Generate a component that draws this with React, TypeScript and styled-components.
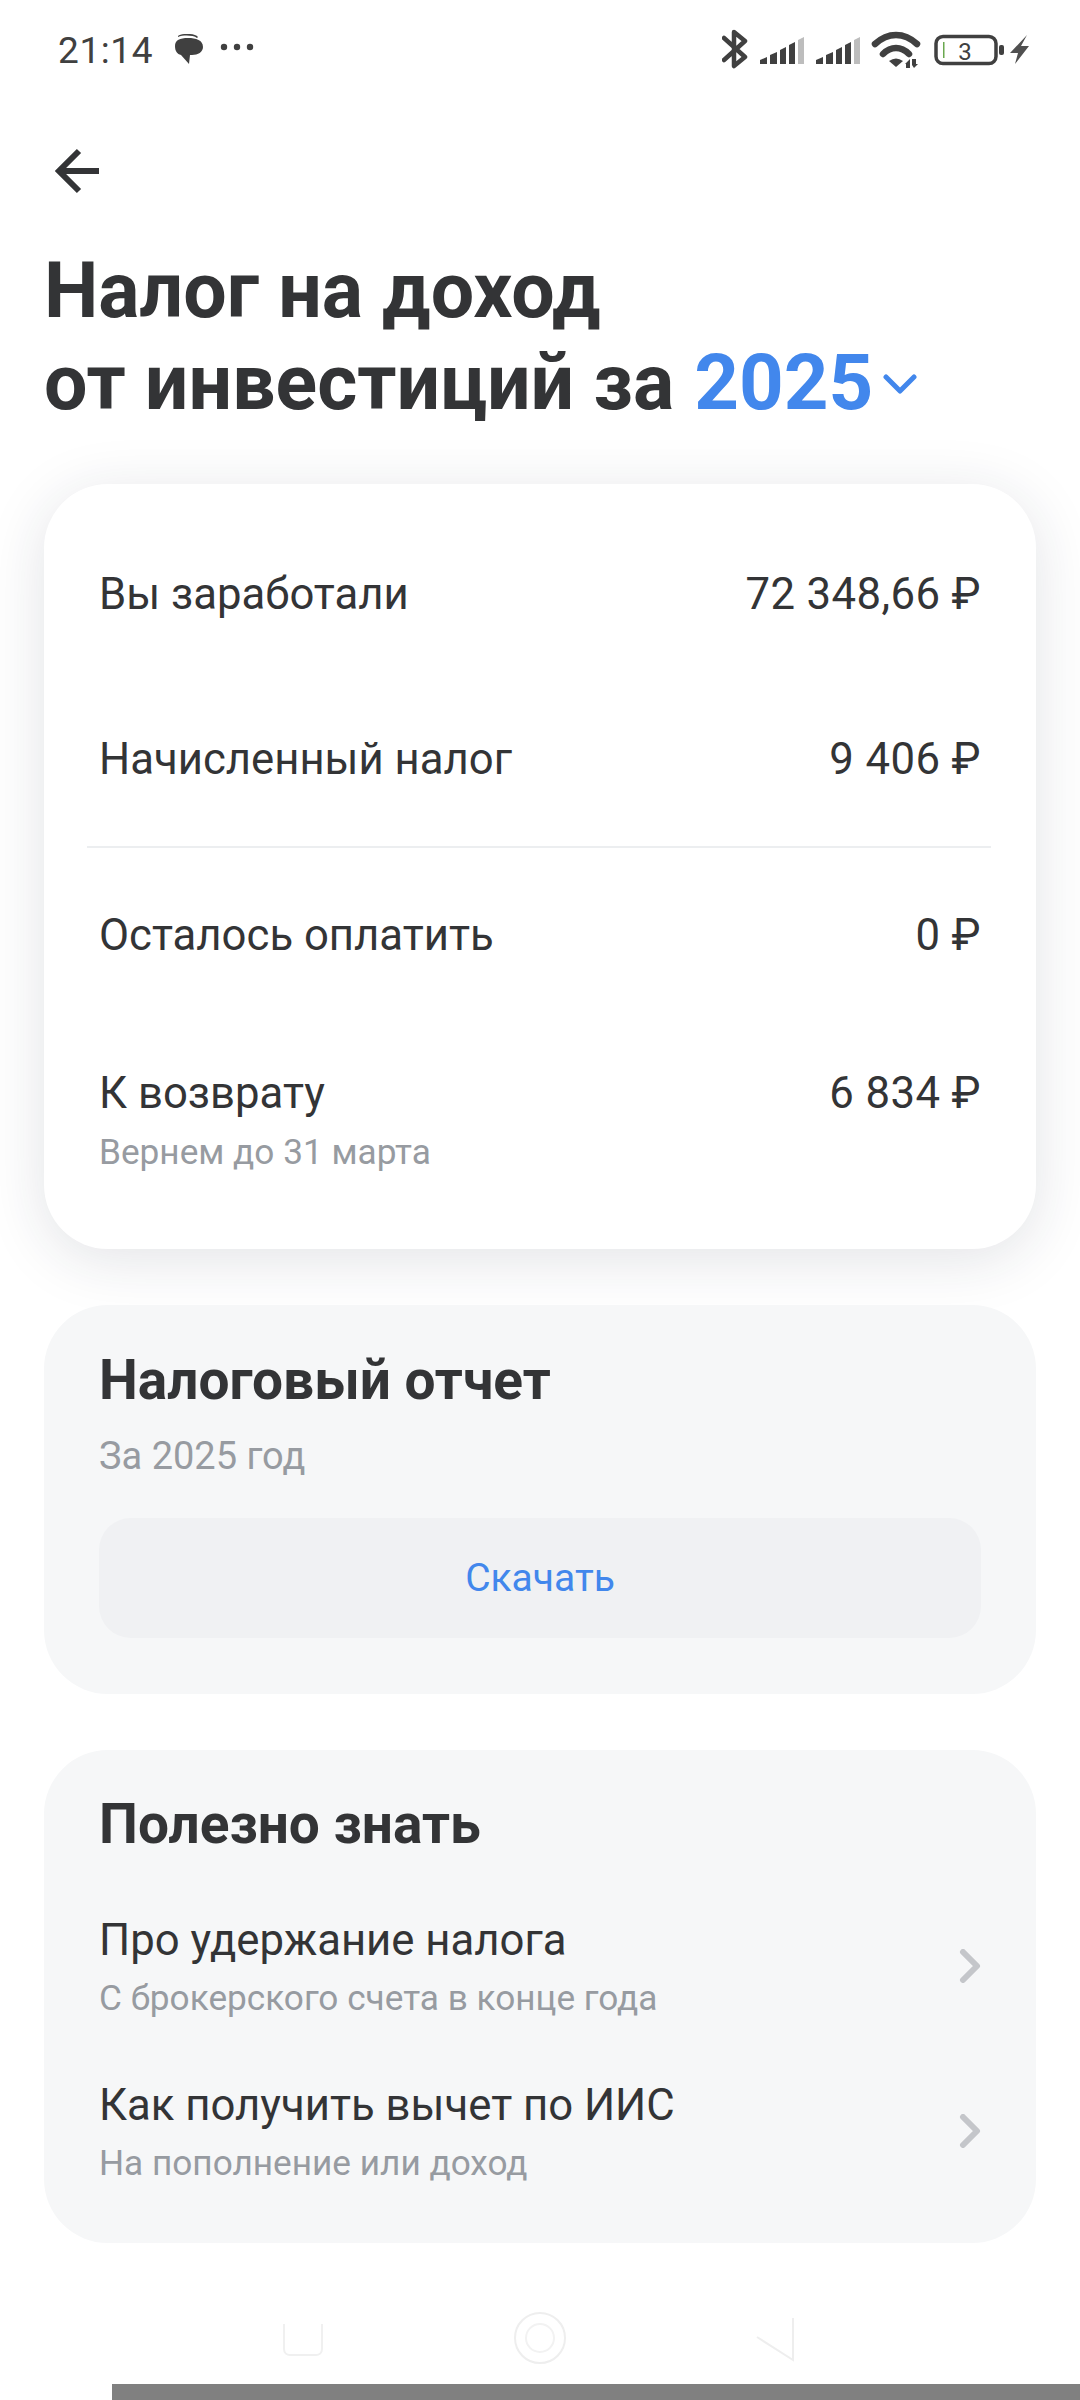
import styled, { createGlobalStyle } from 'styled-components';

const GlobalStyle = createGlobalStyle`
  html, body {
    margin: 0;
    padding: 0;
    background: #fff;
  }
  * {
    box-sizing: border-box;
  }
`;

const Page = styled.div`
  width: 1080px;
  height: 2400px;
  overflow: hidden;
  background: #fff;
  font-family: Roboto, 'Noto Sans', sans-serif;
  color: #333436;
  display: flex;
  flex-direction: column;
`;

const StatusBar = styled.div`
  height: 100px;
  padding: 0 48px 0 58px;
  display: flex;
  align-items: center;
  justify-content: space-between;
`;

const StatusLeft = styled.div`
  display: flex;
  align-items: center;
  gap: 20px;
`;

const Time = styled.span`
  font-size: 37px;
  letter-spacing: 0.6px;
  color: #404040;
`;

const StatusIcons = styled.svg`
  display: block;
`;

const BackButton = styled.div`
  height: 72px;
  margin-top: 35px;
  padding-left: 55px;
  display: flex;
  align-items: center;
`;

const Heading = styled.h1`
  margin: 39px 0 0;
  padding-left: 44px;
  height: 182px;
  font-size: 77px;
  line-height: 91px;
  font-weight: 700;
  color: #333436;
`;

const Year = styled.span`
  color: #4287ec;
  font-size: 78px;
  margin-left: 1px;
`;

const Chevron = styled.svg`
  margin-left: 9px;
  vertical-align: 13px;
`;

const Cards = styled.div`
  margin-top: 56px;
  padding: 0 44px;
  display: flex;
  flex-direction: column;
  gap: 56px;
`;

const SummaryCard = styled.section`
  height: 765px;
  padding: 27px 45px 0 43px;
  background: #fff;
  border-radius: 64px;
  box-shadow: 0 10px 60px rgba(30, 40, 60, 0.13);
  display: flex;
  flex-direction: column;
`;

const SummaryRow = styled.div<{ $height: number }>`
  height: ${({ $height }) => $height}px;
  padding: 0 10px 0 12px;
  display: flex;
  justify-content: space-between;
  align-items: center;
  font-size: 43.7px;
  line-height: 50px;
`;

const Amount = styled.span`
  letter-spacing: 0.4px;
`;

const Divider = styled.div`
  height: 2px;
  margin-top: 5px;
  background: #eceef0;
`;

const RefundRow = styled.div`
  padding: 46px 10px 0 12px;
  display: flex;
  justify-content: space-between;
  font-size: 43.7px;
  line-height: 50px;
`;

const SubText = styled.div`
  font-size: 35.2px;
  line-height: 42px;
  color: #979ba1;
`;

const RefundSub = styled(SubText)`
  margin-top: 13px;
`;

const GrayCard = styled.section`
  padding: 0 55px;
  background: #f6f7f8;
  border-radius: 64px;
`;

const CardTitle = styled.h2`
  margin: 0;
  font-size: 55px;
  line-height: 64px;
  font-weight: 700;
`;

const ReportCard = styled(GrayCard)`
  height: 389px;
  padding-top: 43px;
`;

const ReportSub = styled(SubText)`
  margin-top: 23px;
  font-size: 38px;
`;

const DownloadButton = styled.div`
  margin-top: 41px;
  height: 120px;
  border-radius: 32px;
  background: #f0f1f3;
  color: #4287ec;
  font-size: 39px;
  display: flex;
  align-items: center;
  justify-content: center;
`;

const InfoCard = styled(GrayCard)`
  height: 493px;
  padding-top: 42px;
`;

const InfoList = styled.div`
  margin-top: 39px;
  display: flex;
  flex-direction: column;
  gap: 24px;
`;

const InfoRow = styled.div`
  height: 141px;
  display: flex;
  align-items: center;
  justify-content: space-between;
`;

const InfoLabel = styled.div`
  font-size: 43.7px;
  line-height: 54px;
`;

const InfoSub = styled(SubText)`
  margin-top: 10px;
`;

const NavBar = styled.div`
  margin-top: auto;
  height: 74px;
  padding-left: 283px;
  display: flex;
`;

const GrayBar = styled.div`
  height: 16px;
  margin-left: 112px;
  background: #808080;
`;

function RightChevron() {
  return (
    <svg width="22" height="34" viewBox="0 0 22 34" fill="none">
      <path d="M4 3l14 14L4 31" stroke="#c4c6ca" strokeWidth="6" strokeLinecap="round" strokeLinejoin="round" />
    </svg>
  );
}

function Signal({ x }: { x: number }) {
  return (
    <g transform={`translate(${x} 0)`} fill="#404040">
      <path d="M0 64h7v-7l-7 3z" />
      <path d="M10 64h7V52l-7 3z" />
      <path d="M20 64h6V47l-6 3z" />
      <path d="M29 64h6V42l-6 3z" />
      <path d="M38 64h6V37l-6 3z" fill="#bdbdbd" />
    </g>
  );
}

export default function App() {
  return (
    <Page>
      <GlobalStyle />
      <StatusBar>
        <StatusLeft>
          <Time>21:14</Time>
          <svg width="100" height="32" viewBox="0 0 100 32">
            <path d="M5 2C8-1 22-1 25 3l-1 1C20 1 10 1 5 3z" fill="#404040" />
            <path d="M2 12c0-6 5-8 13-8s15 2 15 9c0 5-5 8-11 8h-2l-1 9-8-9c-4-1-6-4-6-9z" fill="#404040" />
            <circle cx="51" cy="13" r="3.2" fill="#404040" />
            <circle cx="64" cy="13" r="3.2" fill="#404040" />
            <circle cx="77" cy="13" r="3.2" fill="#404040" />
          </svg>
        </StatusLeft>
        <StatusIcons width="310" height="100" viewBox="0 0 310 100" fill="none">
          <path d="M2 38l21 19-11 9V32l11 9L2 60" stroke="#404040" strokeWidth="4.5" strokeLinecap="round" strokeLinejoin="round" />
          <Signal x={38} />
          <Signal x={94} />
          <path d="M153 44c13-12 29-12 42 0M161 54c8-8 18-8 26 0" stroke="#404040" strokeWidth="6.5" strokeLinecap="round" />
          <path d="M167 61q7-5 14 0l-7 6z" fill="#404040" />
          <path d="M183 64l5-5v9h-4v-4zM190 59h4v5h2l-4 4-2-3z" fill="#404040" />
          <rect x="214" y="36.5" width="60" height="27" rx="7" stroke="#404040" strokeWidth="3.5" />
          <rect x="221" y="42" width="1.5" height="16" fill="#6aa84f" />
          <text x="243" y="60" fontSize="24" textAnchor="middle" fill="#404040" fontFamily="Roboto, sans-serif">3</text>
          <rect x="277" y="45" width="5" height="10" rx="2" fill="#404040" />
          <path d="M305 35l-17 18h8l-3 11 14-18h-8z" fill="#505050" />
        </StatusIcons>
      </StatusBar>

      <BackButton>
        <svg width="46" height="46" viewBox="0 0 46 46" fill="none">
          <path d="M44 23H4M24 3L4 23l20 20" stroke="#333436" strokeWidth="6" />
        </svg>
      </BackButton>

      <Heading>
        Налог на доход
        <br />
        от инвестиций за <Year>2025</Year>
        <Chevron width="36" height="22" viewBox="0 0 36 22" fill="none">
          <path d="M4 3l14 14L32 3" stroke="#4287ec" strokeWidth="5" strokeLinecap="round" strokeLinejoin="round" />
        </Chevron>
      </Heading>

      <Cards>
        <SummaryCard>
          <SummaryRow $height={165}>
            <span>Вы заработали</span>
            <Amount>72 348,66 ₽</Amount>
          </SummaryRow>
          <SummaryRow $height={165}>
            <span>Начисленный налог</span>
            <Amount>9 406 ₽</Amount>
          </SummaryRow>
          <Divider />
          <SummaryRow $height={174}>
            <span>Осталось оплатить</span>
            <Amount>0 ₽</Amount>
          </SummaryRow>
          <RefundRow>
            <div>
              <div>К возврату</div>
              <RefundSub>Вернем до 31 марта</RefundSub>
            </div>
            <Amount>6 834 ₽</Amount>
          </RefundRow>
        </SummaryCard>

        <ReportCard>
          <CardTitle>Налоговый отчет</CardTitle>
          <ReportSub>За 2025 год</ReportSub>
          <DownloadButton>Скачать</DownloadButton>
        </ReportCard>

        <InfoCard>
          <CardTitle>Полезно знать</CardTitle>
          <InfoList>
            <InfoRow>
              <div>
                <InfoLabel>Про удержание налога</InfoLabel>
                <InfoSub>С брокерского счета в конце года</InfoSub>
              </div>
              <RightChevron />
            </InfoRow>
            <InfoRow>
              <div>
                <InfoLabel>Как получить вычет по ИИС</InfoLabel>
                <InfoSub>На пополнение или доход</InfoSub>
              </div>
              <RightChevron />
            </InfoRow>
          </InfoList>
        </InfoCard>
      </Cards>

      <NavBar>
        <svg width="520" height="60" viewBox="0 0 520 60" fill="none">
          <path d="M1 14v25c0 4 3 6 6 6h26c3 0 6-2 6-6V14" stroke="#f0f0f0" strokeWidth="2" />
          <circle cx="257" cy="28" r="25" stroke="#eeeeee" strokeWidth="2" />
          <circle cx="257" cy="28" r="14" stroke="#f2f2f2" strokeWidth="2" />
          <path d="M474 27l36 23V8" stroke="#eeeeee" strokeWidth="2" />
        </svg>
      </NavBar>
      <GrayBar />
    </Page>
  );
}
